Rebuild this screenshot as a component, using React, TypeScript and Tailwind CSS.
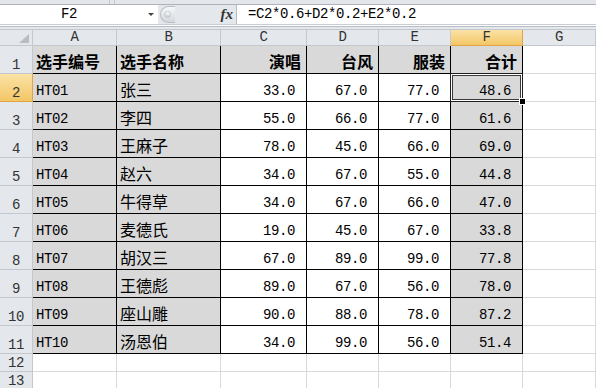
import React from 'react'

const cols = [
  { key: 'A', w: 'w-[84px]' },
  { key: 'B', w: 'w-[104px]' },
  { key: 'C', w: 'w-[86px]' },
  { key: 'D', w: 'w-[72px]' },
  { key: 'E', w: 'w-[72px]' },
  { key: 'F', w: 'w-[72px]' },
  { key: 'G', w: 'w-[73px]' },
]

const head = ['选手编号', '选手名称', '演唱', '台风', '服装', '合计']

const data = [
  ['HT01', '张三', '33.0', '67.0', '77.0', '48.6'],
  ['HT02', '李四', '55.0', '66.0', '77.0', '61.6'],
  ['HT03', '王麻子', '78.0', '45.0', '66.0', '69.0'],
  ['HT04', '赵六', '34.0', '67.0', '55.0', '44.8'],
  ['HT05', '牛得草', '34.0', '67.0', '66.0', '47.0'],
  ['HT06', '麦德氏', '19.0', '45.0', '67.0', '33.8'],
  ['HT07', '胡汉三', '67.0', '89.0', '99.0', '77.8'],
  ['HT08', '王德彪', '89.0', '67.0', '56.0', '78.0'],
  ['HT09', '座山雕', '90.0', '88.0', '78.0', '87.2'],
  ['HT10', '汤恩伯', '34.0', '99.0', '56.0', '51.4'],
]

// SimSun-like latin: thin serif monospace
const mono = "font-['Liberation_Mono',monospace] tracking-[-0.4px]"
const cjk = "font-['Noto_Sans_CJK_SC',sans-serif]"

function RowHead({ n, active, tall }: { n: number; active?: boolean; tall?: boolean }) {
  return (
    <div
      className={`w-[33px] shrink-0 flex items-end justify-center border-r border-b text-[14px] leading-none text-[#333] ${mono} ${
        tall ? 'h-[28px]' : 'h-[18px]'
      } ${
        active
          ? 'bg-gradient-to-b from-[#fbe3a6] to-[#f3c665] border-[#e2a347]'
          : 'bg-[#e4e7eb] border-[#c3c8cf]'
      }`}
    >
      <span className="pb-[1px]">{n}</span>
    </div>
  )
}

function Cell({ col, row, text }: { col: number; row: number; text?: string }) {
  const inBlock = col < 6 && row <= 11
  const gray = inBlock && (row === 1 || col < 2 || col === 5)
  const isCjk = !!text && /[\u4e00-\u9fff]/.test(text)
  const right = col >= 2
  const pad = row === 1 ? 'pr-[5px]' : 'pr-[11px]'
  return (
    <div
      className={`${cols[col].w} shrink-0 flex items-end border-r border-b ${
        row <= 11 ? 'h-[28px]' : 'h-[18px]'
      } ${inBlock ? 'border-black' : 'border-[#d8d9db]'} ${gray ? 'bg-[#d9d9d9]' : 'bg-white'} ${
        right ? `justify-end ${pad}` : 'justify-start pl-[3px]'
      }`}
    >
      {text && (
        <span
          className={`leading-none text-black ${
            isCjk
              ? `${cjk} text-[16px] pb-[4px] ${row === 1 ? 'font-bold' : ''}`
              : `${mono} text-[14px] pb-[3px]`
          }`}
        >
          {text}
        </span>
      )}
    </div>
  )
}

export default function App() {
  return (
    <div className="w-[596px] h-[388px] overflow-hidden bg-white relative">
      {/* ribbon edge */}
      <div className="h-[5px] bg-[#e3e6ea] border-b border-[#aeb3ba] flex">
        <div className="w-[110px] border-r border-[#c4c8ce]" />
        <div className="w-[5px] border-r border-[#c4c8ce]" />
      </div>

      {/* formula bar */}
      <div className="h-[19px] flex bg-[#e4e7eb]">
        <div className="w-[158px] bg-white relative flex items-end justify-center">
          <span className={`${mono} text-[14px] leading-none pb-[3px] pr-[20px] text-black`}>F2</span>
          <div className="absolute right-[4px] top-[8px] w-0 h-0 border-l-[3px] border-r-[3px] border-t-[3px] border-l-transparent border-r-transparent border-t-[#444]" />
        </div>
        <div className="w-[78px] flex items-center pl-[2px]">
          <div className="w-[15px] h-[17px] rounded-l-full border border-r-0 border-[#b9bec5] bg-gradient-to-b from-[#f6f7f9] to-[#d4d8de] flex items-center pl-[3px]">
            <div className="w-[7px] h-[7px] rounded-full bg-gradient-to-b from-[#ffffff] to-[#c9ced5] border border-[#c2c7ce]" />
          </div>
          <div className="flex-1" />
          <span className="font-['Liberation_Serif',serif] italic font-bold text-[15px] leading-none text-[#333] pr-[3px] pb-[1px]">
            fx
          </span>
        </div>
        <div className="flex-1 bg-white border-l border-[#b7bcc3] flex items-end pl-[11px]">
          <span className={`${mono} text-[14px] leading-none pb-[3px] text-black`}>
            =C2*0.6+D2*0.2+E2*0.2
          </span>
        </div>
      </div>

      {/* separator */}
      <div className="h-[5px] border-t border-[#c9cdd3] bg-[#e4e7eb]">
        <div className="h-[1px] bg-white" />
        <div className="h-[1px] bg-[#b8bdc4]" />
      </div>

      {/* column headers */}
      <div className="h-[17px] flex border-t border-[#c3c8cf]">
        <div className="w-[33px] shrink-0 bg-[#e4e7eb] border-r border-b border-[#c3c8cf] relative">
          <svg className="absolute left-[19px] top-[4px]" width="11" height="10" viewBox="0 0 11 10">
            <polygon points="0,9 10,9 10,0" fill="#b8bdc4" />
          </svg>
        </div>
        {cols.map((c) => (
          <div
            key={c.key}
            className={`${c.w} shrink-0 flex items-end justify-center border-r border-b text-[14px] leading-none text-[#333] ${mono} ${
              c.key === 'F'
                ? 'bg-gradient-to-b from-[#fbe3a6] to-[#f3c665] border-[#e2a347]'
                : 'bg-[#e4e7eb] border-[#c3c8cf]'
            }`}
          >
            <span className="pb-[1px]">{c.key}</span>
          </div>
        ))}
      </div>

      {/* header row */}
      <div className="flex">
        <RowHead n={1} tall />
        {cols.map((c, i) => (
          <Cell key={c.key} col={i} row={1} text={head[i]} />
        ))}
      </div>

      {data.map((r, ri) => (
        <div key={ri} className="flex">
          <RowHead n={ri + 2} tall active={ri === 0} />
          {cols.map((c, i) => (
            <Cell key={c.key} col={i} row={ri + 2} text={r[i]} />
          ))}
        </div>
      ))}

      {[12, 13].map((n) => (
        <div key={n} className="flex">
          <RowHead n={n} />
          {cols.map((c, i) => (
            <Cell key={c.key} col={i} row={n} />
          ))}
        </div>
      ))}

      {/* active cell F2 */}
      <div className="absolute left-[450px] top-[73px] w-[73px] h-[29px] border border-[#1e1e1e] shadow-[inset_0_0_0_1px_#ffffff,inset_0_0_0_2px_#3a3a3a]" />
      <div className="absolute left-[519px] top-[98px] w-[7px] h-[7px] bg-black border border-white" />
    </div>
  )
}
